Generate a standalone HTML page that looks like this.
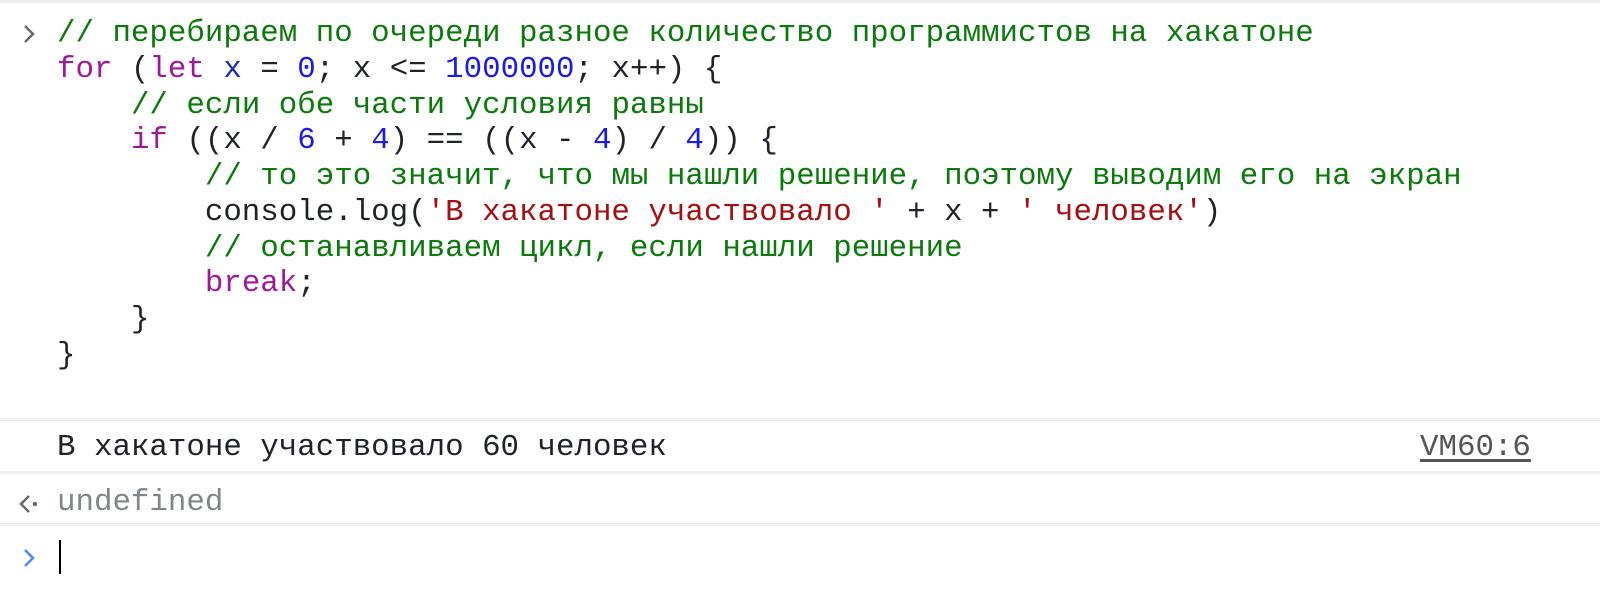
<!DOCTYPE html>
<html><head><meta charset="utf-8"><style>
html,body{margin:0;padding:0;background:#fff;width:1600px;height:610px;overflow:hidden}
body{font-family:"Liberation Mono","DejaVu Sans Mono",monospace;font-size:30.8px;color:#1f2329;position:relative}
.top{position:absolute;left:0;top:0;width:1600px;height:3px;background:#eeeeee}
.code{position:absolute;left:57px;top:16px;line-height:35.75px;white-space:pre}
.c{color:#0a7a0a}.k{color:#a0189a}.n{color:#1a1aee}.s{color:#a50f0f}.v{color:#1c2db0}
.sep{position:absolute;left:0;width:1600px;height:3px;background:#efefef}
.row{position:absolute;left:57px;white-space:pre;line-height:36px}
.g{position:absolute;white-space:pre;line-height:36px}
svg{position:absolute}
</style></head><body>
<div class="top"></div>
<svg style="left:21px;top:22px" width="16" height="24" viewBox="0 0 16 24"><path d="M4 4 L12 12 L4 20" fill="none" stroke="#666" stroke-width="2.4"/></svg>
<div class="code"><span class="c">// перебираем по очереди разное количество программистов на хакатоне</span>
<span class="k">for</span> (<span class="k">let</span> <span class="v">x</span> = <span class="n">0</span>; x &lt;= <span class="n">1000000</span>; x++) {
    <span class="c">// если обе части условия равны</span>
    <span class="k">if</span> ((x / <span class="n">6</span> + <span class="n">4</span>) == ((x - <span class="n">4</span>) / <span class="n">4</span>)) {
        <span class="c">// то это значит, что мы нашли решение, поэтому выводим его на экран</span>
        console.log(<span class="s">'В хакатоне участвовало '</span> + x + <span class="s">' человек'</span>)
        <span class="c">// останавливаем цикл, если нашли решение</span>
        <span class="k">break</span>;
    }
}</div>
<div class="sep" style="top:418px"></div>
<div class="row" style="top:430px;color:#1f2329">В хакатоне участвовало 60 человек</div>
<div class="g" style="left:1420px;top:430px;color:#555;text-decoration:underline;text-underline-offset:4px">VM60:6</div>
<div class="sep" style="top:471px"></div>
<svg style="left:17px;top:492px" width="30" height="24" viewBox="0 0 30 24"><path d="M12 4 L4 12 L12 20" fill="none" stroke="#666" stroke-width="2.4"/><circle cx="18" cy="12" r="2.2" fill="#666"/></svg>
<div class="row" style="top:485px;color:#80868b">undefined</div>
<div class="sep" style="top:523px"></div>
<svg style="left:21px;top:546px" width="16" height="24" viewBox="0 0 16 24"><path d="M4 4 L12 12 L4 20" fill="none" stroke="#4c8df6" stroke-width="2.6"/></svg>
<div style="position:absolute;left:59px;top:540px;width:2px;height:34px;background:#000"></div>
</body></html>
